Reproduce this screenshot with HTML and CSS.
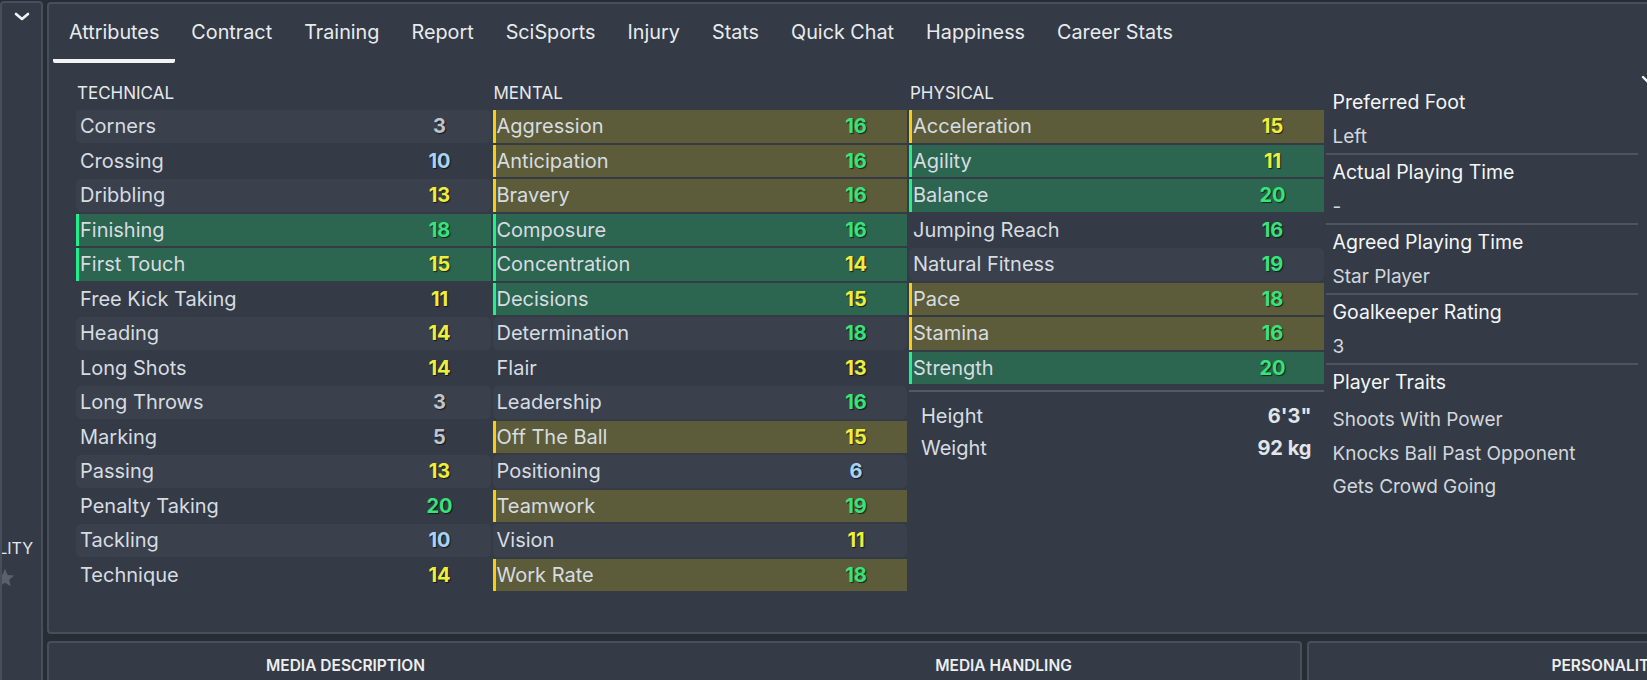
FILE: index.html
```html
<!DOCTYPE html>
<html lang="en">
  <head>
    <meta charset="UTF-8" />
    <meta name="viewport" content="width=device-width, initial-scale=1.0" />
    <title>Player Profile - Attributes</title>
    <link rel="stylesheet" href="styles.css">
  </head>
  <body>
    <div class="screen">
      <aside class="side">
        <div class="side-toggle">
          <svg width="16" height="9" viewBox="0 0 16 9"><polyline points="2,2 8,7 14,2" fill="none" stroke="#f2f4f6" stroke-width="2.6" stroke-linecap="round" stroke-linejoin="round" /></svg>
        </div>
        <div class="side-label"><span>ABILITY</span></div>
        <div class="side-stars">
          <svg width="22" height="22" viewBox="0 0 24 24"><path d="M12 2l2.9 6.6 7.1.6-5.4 4.7 1.6 7-6.2-3.7-6.2 3.7 1.6-7L2 9.2l7.1-.6z" fill="#59616c" /></svg>
        </div>
      </aside>

      <div class="content">
        <section class="panel main">
          <nav class="tabs">
            <span class="tab active">Attributes</span>
            <span class="tab">Contract</span>
            <span class="tab">Training</span>
            <span class="tab">Report</span>
            <span class="tab">SciSports</span>
            <span class="tab">Injury</span>
            <span class="tab">Stats</span>
            <span class="tab">Quick Chat</span>
            <span class="tab">Happiness</span>
            <span class="tab">Career Stats</span>
          </nav>

          <div class="sheet">
            <div class="group">
              <h3>TECHNICAL</h3>
              <ul class="attrs">
                <li class="attr stripe"><span>Corners</span><b class="low">3</b></li>
                <li class="attr"><span>Crossing</span><b class="mid">10</b></li>
                <li class="attr stripe"><span>Dribbling</span><b class="good">13</b></li>
                <li class="attr key-g"><span>Finishing</span><b class="top">18</b></li>
                <li class="attr key-g"><span>First Touch</span><b class="good">15</b></li>
                <li class="attr"><span>Free Kick Taking</span><b class="good">11</b></li>
                <li class="attr stripe"><span>Heading</span><b class="good">14</b></li>
                <li class="attr"><span>Long Shots</span><b class="good">14</b></li>
                <li class="attr stripe"><span>Long Throws</span><b class="low">3</b></li>
                <li class="attr"><span>Marking</span><b class="low">5</b></li>
                <li class="attr stripe"><span>Passing</span><b class="good">13</b></li>
                <li class="attr"><span>Penalty Taking</span><b class="top">20</b></li>
                <li class="attr stripe"><span>Tackling</span><b class="mid">10</b></li>
                <li class="attr"><span>Technique</span><b class="good">14</b></li>
              </ul>
            </div>

            <div class="group">
              <h3>MENTAL</h3>
              <ul class="attrs">
                <li class="attr key-y"><span>Aggression</span><b class="top">16</b></li>
                <li class="attr key-y"><span>Anticipation</span><b class="top">16</b></li>
                <li class="attr key-y"><span>Bravery</span><b class="top">16</b></li>
                <li class="attr key-g"><span>Composure</span><b class="top">16</b></li>
                <li class="attr key-g"><span>Concentration</span><b class="good">14</b></li>
                <li class="attr key-g"><span>Decisions</span><b class="good">15</b></li>
                <li class="attr stripe"><span>Determination</span><b class="top">18</b></li>
                <li class="attr"><span>Flair</span><b class="good">13</b></li>
                <li class="attr stripe"><span>Leadership</span><b class="top">16</b></li>
                <li class="attr key-y"><span>Off The Ball</span><b class="good">15</b></li>
                <li class="attr stripe"><span>Positioning</span><b class="mid">6</b></li>
                <li class="attr key-y"><span>Teamwork</span><b class="top">19</b></li>
                <li class="attr stripe"><span>Vision</span><b class="good">11</b></li>
                <li class="attr key-y"><span>Work Rate</span><b class="top">18</b></li>
              </ul>
            </div>

            <div class="group">
              <h3>PHYSICAL</h3>
              <ul class="attrs">
                <li class="attr key-y"><span>Acceleration</span><b class="good">15</b></li>
                <li class="attr key-g"><span>Agility</span><b class="good">11</b></li>
                <li class="attr key-g"><span>Balance</span><b class="top">20</b></li>
                <li class="attr"><span>Jumping Reach</span><b class="top">16</b></li>
                <li class="attr stripe"><span>Natural Fitness</span><b class="top">19</b></li>
                <li class="attr key-y"><span>Pace</span><b class="top">18</b></li>
                <li class="attr key-y"><span>Stamina</span><b class="top">16</b></li>
                <li class="attr key-g"><span>Strength</span><b class="top">20</b></li>
              </ul>
              <div class="measures">
                <div class="measure"><span>Height</span><b>6'3"</b></div>
                <div class="measure"><span>Weight</span><b>92 kg</b></div>
              </div>
            </div>

            <div class="info">
              <div class="info-item">
                <div class="info-label">Preferred Foot</div>
                <div class="info-value">Left</div>
              </div>
              <div class="info-item">
                <div class="info-label">Actual Playing Time</div>
                <div class="info-value">-</div>
              </div>
              <div class="info-item">
                <div class="info-label">Agreed Playing Time</div>
                <div class="info-value">Star Player</div>
              </div>
              <div class="info-item">
                <div class="info-label">Goalkeeper Rating</div>
                <div class="info-value">3</div>
              </div>
              <div class="info-item last">
                <div class="info-label">Player Traits</div>
                <ul class="traits">
                  <li>Shoots With Power</li>
                  <li>Knocks Ball Past Opponent</li>
                  <li>Gets Crowd Going</li>
                </ul>
              </div>
            </div>
          </div>

          <svg class="scroll-chevron" width="16" height="10" viewBox="0 0 16 10"><polyline points="2,2 8,8 14,2" fill="none" stroke="#f2f4f6" stroke-width="2.4" stroke-linecap="round" stroke-linejoin="round" /></svg>
        </section>

        <div class="bottom">
          <section class="panel media">
            <h4>MEDIA DESCRIPTION</h4>
            <h4>MEDIA HANDLING</h4>
          </section>
          <section class="panel personality">
            <h4>PERSONALITY</h4>
          </section>
        </div>
      </div>
    </div>
  </body>
</html>
```

FILE: styles.css
```css
* {
  box-sizing: border-box;
}
body {
  margin: 0;
  background: #272d35;
  font-family: Inter, "Noto Sans", sans-serif;
  color: #d9dee3;
  overflow: hidden;
  height: 680px;
}
ul {
  list-style: none;
  margin: 0;
  padding: 0;
}

.screen {
  display: flex;
  gap: 4px;
  width: 1920px;
  height: 680px;
}

/* left collapsed panel */
.side {
  width: 43px;
  flex-shrink: 0;
  height: 700px;
  margin-top: 1px;
  background: #343b46;
  border: 2px solid #474f5a;
  border-radius: 4px;
  overflow: hidden;
}
.side-toggle {
  display: flex;
  justify-content: center;
  padding-top: 9px;
  height: 30px;
}
.side-label {
  display: flex;
  justify-content: flex-end;
  width: 31px;
  margin-top: 505px;
  line-height: 20px;
  font-size: 16px;
  color: #e4e8ec;
  white-space: nowrap;
}
.side-stars {
  margin: 9px 0 0 -8px;
}

.content {
  flex: 1;
  display: flex;
  flex-direction: column;
  gap: 7px;
  padding-top: 2px;
}

.panel {
  background: #343b46;
  border: 2px solid #474f5a;
  border-radius: 4px;
}

/* main attributes panel */
.main {
  position: relative;
  height: 632px;
  flex-shrink: 0;
}

.tabs {
  display: flex;
  padding-left: 4px;
}
.tab {
  padding: 16px 16px 14.5px;
  line-height: 24px;
  font-size: 19.8px;
  color: #e8ebee;
  border-bottom: 4px solid transparent;
  cursor: pointer;
}
.tab.active {
  border-bottom-color: #f1f3f5;
  border-radius: 0 0 2px 2px;
}

.sheet {
  display: grid;
  grid-template-columns: 414.5px 414.5px 414.5px 312px;
  column-gap: 2px;
  padding-left: 27px;
  margin-top: 20px;
}

.group h3 {
  margin: 0 0 7.5px;
  padding-left: 1px;
  font-size: 17px;
  font-weight: 400;
  line-height: 20px;
  color: #e6e9ec;
}

.attrs {
  display: flex;
  flex-direction: column;
  gap: 2px;
}
.attr {
  display: flex;
  align-items: center;
  justify-content: space-between;
  height: 32.5px;
  padding-left: 4px;
  font-size: 20px;
  color: #d7dce1;
}
.attr b {
  width: 44px;
  margin-right: 29px;
  text-align: center;
  font-weight: 700;
  text-shadow: 1px 1px 1px rgba(0, 0, 0, 0.65);
}
.stripe {
  background: #3a414c;
  border-radius: 5px;
}
.key-y {
  background: #5d5c3a;
  box-shadow: inset 3px 0 #f6cf14;
}
.key-g {
  background: #2c6550;
  box-shadow: inset 3px 0 #1ff08a;
}

/* attribute value colours */
.low {
  color: #bfc5ca;
}
.mid {
  color: #a9d3f4;
}
.good {
  color: #eeee3c;
}
.top {
  color: #37e37b;
}

.measures {
  margin-top: 5.5px;
  padding-top: 8px;
  border-top: 2px solid #525a65;
}
.measure {
  display: flex;
  justify-content: space-between;
  align-items: center;
  height: 32.5px;
  padding: 0 12px;
  font-size: 20px;
  color: #d7dce1;
}
.measure b {
  font-weight: 700;
  color: #e2e6ea;
}

/* right info column */
.info {
  padding-top: 2px;
}
.info-item {
  border-bottom: 2px solid #4d5560;
}
.info-item.last {
  border-bottom: none;
}
.info-label {
  padding-left: 7px;
  line-height: 35px;
  font-size: 19.5px;
  color: #f3f5f7;
}
.info-value {
  padding: 1px 0 0 7px;
  line-height: 32px;
  font-size: 19px;
  color: #d2d7dc;
}
.traits {
  margin-top: 3.25px;
  padding-left: 7px;
}
.traits li {
  line-height: 33.75px;
  font-size: 19px;
  color: #d2d7dc;
}

.scroll-chevron {
  position: absolute;
  left: 1592px;
  top: 71px;
}

/* bottom panels */
.bottom {
  display: flex;
  gap: 5px;
}
.bottom h4 {
  margin: 0;
  padding-top: 13px;
  line-height: 20px;
  font-size: 15.5px;
  font-weight: 600;
  text-align: center;
  color: #eceef0;
  height: 60px;
}
.media {
  width: 1255px;
  display: grid;
  grid-template-columns: 1fr 1fr;
  column-gap: 65px;
}
.personality {
  width: 598px;
}
```
